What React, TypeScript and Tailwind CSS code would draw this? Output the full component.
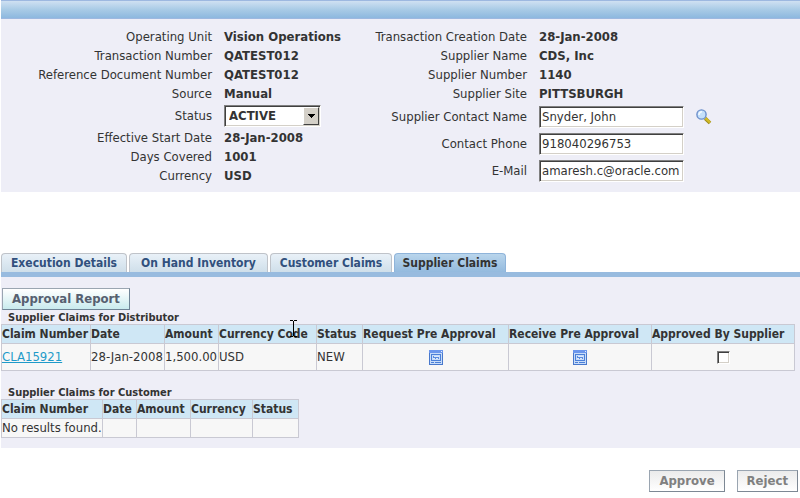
import { useState, type ReactNode } from 'react';

const LEFT_TOP = [
  ['Operating Unit', 'Vision Operations'],
  ['Transaction Number', 'QATEST012'],
  ['Reference Document Number', 'QATEST012'],
  ['Source', 'Manual'],
];

const LEFT_BOTTOM = [
  ['Effective Start Date', '28-Jan-2008'],
  ['Days Covered', '1001'],
  ['Currency', 'USD'],
];

const RIGHT = [
  ['Transaction Creation Date', '28-Jan-2008'],
  ['Supplier Name', 'CDS, Inc'],
  ['Supplier Number', '1140'],
  ['Supplier Site', 'PITTSBURGH'],
];

const TABS = [
  { name: 'Execution Details', width: 'w-[126px]' },
  { name: 'On Hand Inventory', width: 'w-[139px]' },
  { name: 'Customer Claims', width: 'w-[122px]' },
  { name: 'Supplier Claims', width: 'w-[112px]' },
];

const DISTRIBUTOR_COLUMNS = [
  { name: 'Claim Number', width: 'w-[89px]' },
  { name: 'Date', width: 'w-[74px]' },
  { name: 'Amount', width: 'w-[54px]' },
  { name: 'Currency Code', width: 'w-[98px]' },
  { name: 'Status', width: 'w-[46px]' },
  { name: 'Request Pre Approval', width: 'w-[146px]' },
  { name: 'Receive Pre Approval', width: 'w-[143px]' },
  { name: 'Approved By Supplier', width: 'w-[143px]' },
];

const CUSTOMER_COLUMNS = [
  { name: 'Claim Number', width: 'w-[101px]' },
  { name: 'Date', width: 'w-[34px]' },
  { name: 'Amount', width: 'w-[54px]' },
  { name: 'Currency', width: 'w-[62px]' },
  { name: 'Status', width: 'w-[46px]' },
];

const sunken =
  'border border-t-[#808080] border-l-[#808080] border-r-white border-b-white bg-white shadow-[inset_1px_1px_0_#404040,inset_-1px_-1px_0_#d4d0c8]';

const cell = 'border border-[#c9c9d3] p-0 whitespace-nowrap';

function Field({ label, value, labelWidth }: { label: string; value: string; labelWidth: string }) {
  return (
    <div className="flex h-[19px] items-center gap-3">
      <dt className={`shrink-0 text-right ${labelWidth}`}>{label}</dt>
      <dd className="font-bold whitespace-nowrap">{value}</dd>
    </div>
  );
}

function InputRow({ id, label, value, children }: { id: string; label: string; value: string; children?: ReactNode }) {
  const [text, setText] = useState(value);
  return (
    <div className="flex h-[27px] items-center gap-3">
      <label htmlFor={id} className="w-44 shrink-0 text-right">
        {label}
      </label>
      <input
        id={id}
        value={text}
        onChange={(e) => setText(e.target.value)}
        className={`h-[22px] w-[145px] px-[2px] ${sunken}`}
      />
      {children}
    </div>
  );
}

function SearchIcon() {
  return (
    <svg width="16" height="16" viewBox="0 0 16 16">
      <path d="M9.2 9.4 14 14" stroke="#9c8a1c" strokeWidth="3.6" />
      <path d="M9.2 8.9 14 13.5" stroke="#d3bb25" strokeWidth="2.4" />
      <circle cx="5.5" cy="5.5" r="4.6" fill="#c5e0fa" stroke="#6b8fcb" strokeWidth="1.4" />
      <path d="M3 6a3 3 0 0 1 3-3.2" stroke="#f4faff" strokeWidth="1.6" fill="none" />
    </svg>
  );
}

function FormIcon() {
  return (
    <svg width="14" height="15" viewBox="0 0 14 15" shapeRendering="crispEdges" className="block">
      <rect width="14" height="15" fill="#4878cc" />
      <rect width="14" height="3" fill="#6b96ec" />
      <path d="M12 1h1v1h-1z" fill="#e6effc" />
      <path d="M1 3h12v11H1z" fill="#c8dcf8" />
      <path d="M2 4h10v7H2z" fill="#4b80d8" />
      <path d="M3 5h8v5H3z" fill="#c8dcf8" />
      <path d="M4 6h6v3H4z" fill="#5a8ce0" />
      <path d="M5 6h5v1H5zM4 8h2v1H4zM7 8h2v1H7z" fill="#dce9fc" />
      <path d="M2 12h3v1H2zM6 12h6v1H6z" fill="#4b80d8" />
    </svg>
  );
}

function HeadRow({ columns }: { columns: { name: string; width: string }[] }) {
  return (
    <thead className="text-[12px]">
      <tr className="h-[19px] bg-[#cfe7f5]">
        {columns.map((column) => (
          <th key={column.name} className={`text-left ${cell} ${column.width}`}>
            {column.name}
          </th>
        ))}
      </tr>
    </thead>
  );
}

export default function App() {
  const [activeTab, setActiveTab] = useState('Supplier Claims');
  const [approved, setApproved] = useState(false);

  return (
    <main className="bg-white pl-px font-['DejaVu_Sans_Condensed','DejaVu_Sans',sans-serif] text-[13px] leading-4 text-[#333333]">
      <header className="h-[19px] border-y border-[#9db8e0] bg-linear-to-b from-[#cfe0f2] via-[#a9cbe6] to-[#8db8df]" />

      <section className="flex bg-[#eeeef7] pt-2 pb-[7px]">
        <div className="w-[350px] shrink-0">
          <dl>
            {LEFT_TOP.map(([label, value]) => (
              <Field key={label} label={label} value={value} labelWidth="w-[211px]" />
            ))}
          </dl>
          <div className="flex h-[25px] items-center gap-3">
            <label htmlFor="status" className="w-[211px] shrink-0 text-right">
              Status
            </label>
            <div className="relative">
              <select
                id="status"
                defaultValue="ACTIVE"
                className={`block h-[22px] w-[97px] appearance-none pl-1 font-bold ${sunken}`}
              >
                <option>ACTIVE</option>
                <option>CLOSED</option>
              </select>
              <span className="pointer-events-none absolute top-[2px] right-[2px] flex h-[18px] w-4 items-center justify-center border border-t-white border-l-white border-r-[#404040] border-b-[#404040] bg-[#d4d0c8]">
                <svg width="7" height="4" viewBox="0 0 7 4" shapeRendering="crispEdges">
                  <path d="M0 0h7v1H0zM1 1h5v1H1zM2 2h3v1H2zM3 3h1v1H3z" fill="#000" />
                </svg>
              </span>
            </div>
          </div>
          <dl>
            {LEFT_BOTTOM.map(([label, value]) => (
              <Field key={label} label={label} value={value} labelWidth="w-[211px]" />
            ))}
          </dl>
        </div>

        <div className="grow">
          <dl>
            {RIGHT.map(([label, value]) => (
              <Field key={label} label={label} value={value} labelWidth="w-44" />
            ))}
          </dl>
          <InputRow id="contact" label="Supplier Contact Name" value="Snyder, John">
            <button type="button" aria-label="Search for supplier contact">
              <SearchIcon />
            </button>
          </InputRow>
          <InputRow id="phone" label="Contact Phone" value="918040296753" />
          <InputRow id="email" label="E-Mail" value="amaresh.c@oracle.com" />
        </div>
      </section>

      <nav className="mt-[61px] flex gap-[2px] text-[12px]">
        {TABS.map((tab) => (
          <button
            key={tab.name}
            type="button"
            onClick={() => setActiveTab(tab.name)}
            className={`h-[19px] rounded-t-sm border border-b-0 bg-linear-to-b font-bold whitespace-nowrap ${tab.width} ${
              tab.name === activeTab
                ? 'border-[#8fb4da] from-[#b9d5ec] to-[#94bade] text-[#333333]'
                : 'border-[#bfc3c9] from-[#e9f1f8] to-[#cfdfea] text-[#31507d]'
            }`}
          >
            {tab.name}
          </button>
        ))}
      </nav>

      <section className="relative border-t-[5px] border-[#98bbdf] bg-[#eeeef7] pt-[11px] pb-[10px]">
        <button
          type="button"
          className="ml-px block h-[22px] w-32 border border-t-[#9aa5b1] border-l-[#9aa5b1] border-r-[#6f8496] border-b-[#6f8496] bg-linear-to-b from-white to-[#c9ebee] font-bold text-[#566070]"
        >
          Approval Report
        </button>

        <h2 className="mt-[2px] pl-[7px] text-[11px] leading-3 font-bold">Supplier Claims for Distributor</h2>
        <table className="w-[794px] table-fixed border-collapse">
          <HeadRow columns={DISTRIBUTOR_COLUMNS} />
          <tbody>
            <tr className="h-[27px] bg-[#f7f7f7]">
              <td className={cell}>
                <a href="#CLA15921" className="text-[#1f9bc9] underline">
                  CLA15921
                </a>
              </td>
              <td className={cell}>28-Jan-2008</td>
              <td className={cell}>1,500.00</td>
              <td className={cell}>USD</td>
              <td className={cell}>NEW</td>
              <td className={cell}>
                <button type="button" aria-label="Request pre approval" className="mx-auto block">
                  <FormIcon />
                </button>
              </td>
              <td className={cell}>
                <button type="button" aria-label="Receive pre approval" className="mx-auto block">
                  <FormIcon />
                </button>
              </td>
              <td className={cell}>
                <input
                  type="checkbox"
                  aria-label="Approved by supplier"
                  checked={approved}
                  onChange={(e) => setApproved(e.target.checked)}
                  className={`mx-auto block size-[13px] appearance-none checked:bg-[#333333] ${sunken}`}
                />
              </td>
            </tr>
          </tbody>
        </table>

        <h2 className="mt-4 pl-[7px] text-[11px] leading-3 font-bold">Supplier Claims for Customer</h2>
        <table className="w-[298px] table-fixed border-collapse">
          <HeadRow columns={CUSTOMER_COLUMNS} />
          <tbody>
            <tr className="h-[19px] bg-[#f7f7f7]">
              <td className={cell}>No results found.</td>
              <td className={cell} />
              <td className={cell} />
              <td className={cell} />
              <td className={cell} />
            </tr>
          </tbody>
        </table>

        {/* text cursor */}
        <svg
          width="7"
          height="17"
          viewBox="0 0 7 17"
          shapeRendering="crispEdges"
          className="pointer-events-none absolute top-[43px] left-[289px]"
        >
          <path d="M0 0h3v1H0zM4 0h3v1H4zM3 1h1v15H3zM0 16h3v1H0zM4 16h3v1H4z" fill="#000" />
        </svg>
      </section>

      <footer className="mt-[22px] flex justify-end gap-3 pr-[2px]">
        {['Approve', 'Reject'].map((name) => (
          <button
            key={name}
            type="button"
            className="h-[22px] border border-t-[#9aa5b1] border-l-[#9aa5b1] border-r-[#7d8894] border-b-[#7d8894] bg-linear-to-b from-[#ebebeb] to-white px-[9px] font-bold text-[#808080]"
          >
            {name}
          </button>
        ))}
      </footer>
    </main>
  );
}
